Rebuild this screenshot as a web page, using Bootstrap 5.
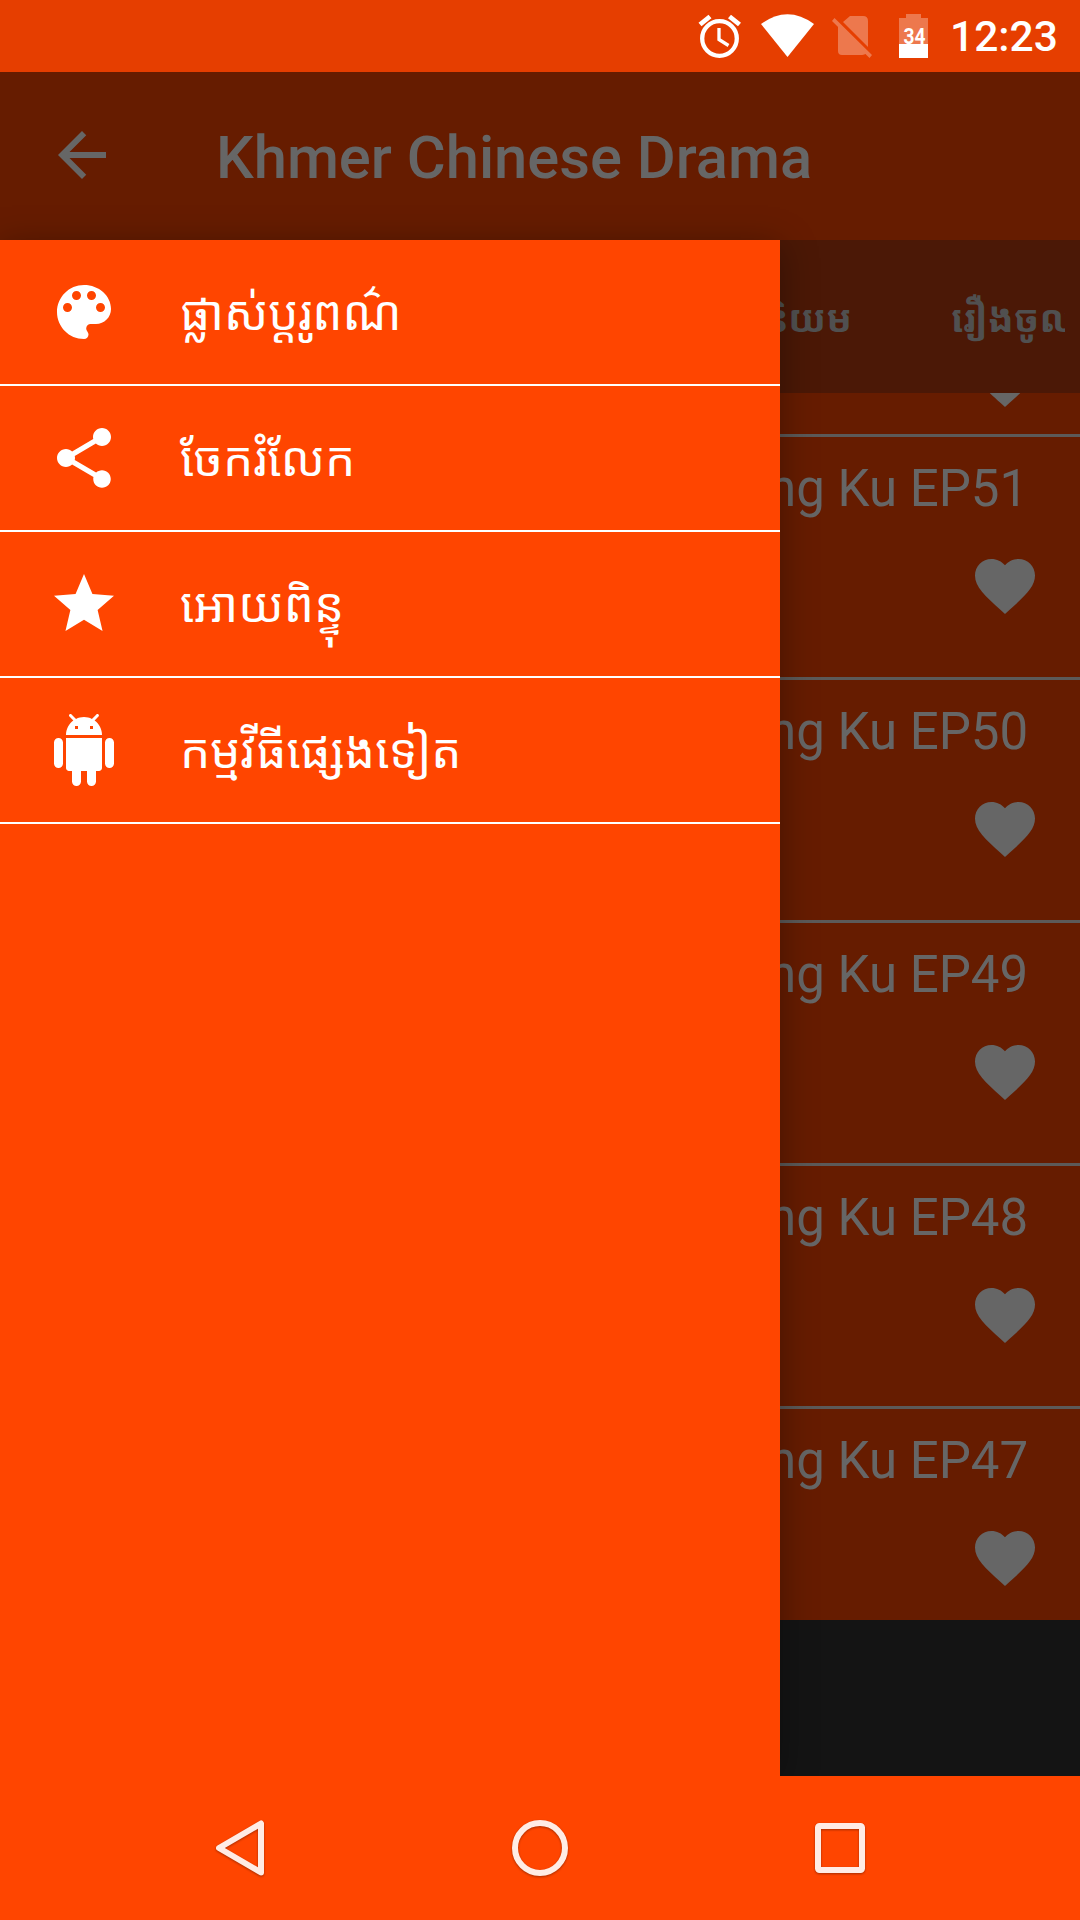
<!DOCTYPE html>
<html lang="km">
<head>
<meta charset="utf-8">
<meta name="viewport" content="width=device-width, initial-scale=1">
<title>Khmer Chinese Drama</title>
<link href="https://cdn.jsdelivr.net/npm/bootstrap@5.3.0/dist/css/bootstrap.min.css" rel="stylesheet">
<style>
  body { font-family: Roboto, "Noto Sans Khmer", "Khmer OS", "Noto Sans", "DejaVu Sans", sans-serif; background: #ff4500; }
  svg { display: block; flex: none; }
  .screen { width: 1080px; height: 1920px; }
  .status-bar { height: 72px; background: #e63e00; z-index: 3; padding-right: 22px; gap: 10px; }
  .status-bar .clock { font-size: 42.500px; font-weight: 500; line-height: 72px; width: 108px; padding-top: 1px; height: 72px; white-space: nowrap; }
  .app-bar { height: 168px; background: #661c00; color: #666; padding: 0 0 2px 46px; }
  .app-bar .app-title { font-size: 59.700px; font-weight: 500; line-height: 1; margin-left: 98px; padding-top: 8px; }
  .stage { height: 1536px; }
  .tab-strip { height: 153px; background: #4b1806; color: #505050; font-size: 38px; font-weight: 700; padding: 5px 15px 0 763px; }
  .tab-strip .tab-label { line-height: 1.6; white-space: nowrap; }
  .tab-strip .tab-cut { width: 114px; overflow: hidden; }
  .episodes { height: 1227px; background: #661c00; color: #666; }
  .episode { height: 243px; border-bottom: 3px solid #5c5a59; padding: 19px 39px 0 0; flex: none; }
  .episode .ep-name { font-size: 51px; line-height: 66px; margin-bottom: 28px; padding-left: 768px; white-space: nowrap; }
  .episode.first-row { height: 44px; padding-top: 0; overflow: hidden; }
  .episode.first-row svg { margin-top: -50px; }
  .ad-slot { height: 156px; background: #141414; }
  .drawer { width: 780px; height: 1536px; background: #ff4500; box-shadow: 0 6px 34px rgba(0,0,0,.34); z-index: 2; }
  .drawer .drawer-item { height: 146px; border-bottom: 2px solid #fff; padding-left: 48px; gap: 60px; color: #fff; font-size: 47.700px; line-height: 1.6; white-space: nowrap; }
  .drawer .drawer-item span { padding-top: 4px; }
  .nav-bar { height: 144px; background: #ff4500; z-index: 3; }
  .nav-bar svg { filter: drop-shadow(0 1px 1px rgba(0,0,0,.35)); }
</style>
</head>
<body>
<svg class="d-none">
  <symbol id="heart" viewBox="0 0 24 24"><path fill="#666" d="M12 21.35l-1.45-1.32C5.4 15.36 2 12.28 2 8.5 2 5.42 4.42 3 7.5 3c1.74 0 3.41.81 4.5 2.09C13.09 3.81 14.76 3 16.5 3 19.58 3 22 5.42 22 8.5c0 3.78-3.4 6.86-8.55 11.54L12 21.35z"/></symbol>
</svg>
<div class="screen d-flex flex-column overflow-hidden position-relative">
  <header class="status-bar d-flex justify-content-end align-items-start position-relative text-white flex-shrink-0">
    <svg width="280" height="72" viewBox="0 0 280 72">
      <g fill="none" stroke="#fff">
        <circle cx="59.500" cy="38.500" r="17.300" stroke-width="4.300"/>
        <path stroke-width="4.800" d="M40 24.500l10-8M79.500 24.500l-10-8"/>
        <path stroke-width="3.300" d="M59 28v11.500l9.500 6"/>
      </g>
      <path fill="#fff" d="M101 24Q127.500 4.500 154 24L127.500 57z"/>
      <path fill="#fff" fill-opacity=".3" d="M190 16h13q5 0 5 5v26L183 22z M178 25L206 53q-1 2-4 2h-20q-4 0-4-4z M174.500 18L212 55l-2.500 3L172 21z"/>
      <path fill="#fff" fill-opacity=".3" d="M239 44V18h7v-4h15v4h7v26z"/>
      <path fill="#fff" d="M239 44h29v14h-29z"/>
      <text x="254.500" y="44" text-anchor="middle" font-family="Roboto" font-weight="700" font-size="22.500" textLength="22" lengthAdjust="spacingAndGlyphs" fill="#fff">34</text>
    </svg>
    <div class="clock">12:23</div>
  </header>

  <div class="app-bar d-flex align-items-center flex-shrink-0">
    <svg width="72" height="72" viewBox="0 0 24 24"><path fill="#666" d="M20 11H7.830l5.590-5.590L12 4l-8 8 8 8 1.410-1.410L7.830 13H20v-2z"/></svg>
    <div class="app-title">Khmer Chinese Drama</div>
  </div>

  <main class="stage position-relative flex-shrink-0">
    <div class="tab-strip d-flex align-items-center justify-content-between">
      <div class="tab-label">និយម</div>
      <div class="tab-label tab-cut">រឿងចូល</div>
    </div>
    <div class="episodes d-flex flex-column overflow-hidden">
      <div class="episode first-row d-flex flex-column align-items-end"><svg width="72" height="72"><use href="#heart"/></svg></div>
      <div class="episode d-flex flex-column align-items-end"><div class="ep-name w-100">ng Ku EP51</div><svg width="72" height="72"><use href="#heart"/></svg></div>
      <div class="episode d-flex flex-column align-items-end"><div class="ep-name w-100">ng Ku EP50</div><svg width="72" height="72"><use href="#heart"/></svg></div>
      <div class="episode d-flex flex-column align-items-end"><div class="ep-name w-100">ng Ku EP49</div><svg width="72" height="72"><use href="#heart"/></svg></div>
      <div class="episode d-flex flex-column align-items-end"><div class="ep-name w-100">ng Ku EP48</div><svg width="72" height="72"><use href="#heart"/></svg></div>
      <div class="episode d-flex flex-column align-items-end"><div class="ep-name w-100">ng Ku EP47</div><svg width="72" height="72"><use href="#heart"/></svg></div>
    </div>
    <div class="ad-slot"></div>

    <nav class="drawer position-absolute top-0 start-0">
      <div class="drawer-item d-flex align-items-center">
        <svg width="72" height="72" viewBox="0 0 24 24" fill="#fff"><path d="M12 3c-4.970 0-9 4.030-9 9s4.030 9 9 9c.830 0 1.500-.670 1.500-1.500 0-.390-.150-.740-.390-1.010-.230-.260-.380-.610-.380-.990 0-.830.670-1.500 1.500-1.500H16c2.760 0 5-2.240 5-5 0-4.420-4.030-8-9-8zm-5.500 9c-.830 0-1.500-.670-1.500-1.500S5.670 9 6.500 9 8 9.670 8 10.500 7.330 12 6.500 12zm3-4C8.670 8 8 7.330 8 6.500S8.670 5 9.500 5s1.500.670 1.500 1.500S10.330 8 9.500 8zm5 0c-.830 0-1.500-.670-1.500-1.500S13.670 5 14.500 5s1.500.670 1.500 1.500S15.330 8 14.500 8zm3 4c-.830 0-1.500-.670-1.500-1.500S16.670 9 17.500 9s1.500.670 1.500 1.500-.670 1.500-1.500 1.500z"/></svg>
        <span>ផ្លាស់ប្តរូពណ៌</span>
      </div>
      <div class="drawer-item d-flex align-items-center">
        <svg width="72" height="72" viewBox="0 0 24 24" fill="#fff"><path d="M18 16.080c-.760 0-1.440.300-1.960.770L8.910 12.700c.050-.230.090-.460.090-.700s-.040-.470-.090-.700l7.050-4.110c.540.500 1.250.810 2.040.810 1.660 0 3-1.340 3-3s-1.340-3-3-3-3 1.340-3 3c0 .240.040.470.090.700L8.040 9.810C7.500 9.310 6.790 9 6 9c-1.660 0-3 1.340-3 3s1.340 3 3 3c.790 0 1.500-.310 2.040-.810l7.120 4.160c-.050.210-.080.430-.080.650 0 1.610 1.310 2.920 2.920 2.920s2.920-1.310 2.920-2.920-1.310-2.920-2.920-2.920z"/></svg>
        <span>ចែករំលែក</span>
      </div>
      <div class="drawer-item d-flex align-items-center">
        <svg width="72" height="72" viewBox="0 0 24 24" fill="#fff"><path d="M12 17.270L18.180 21l-1.640-7.030L22 9.240l-7.190-.610L12 2 9.190 8.630 2 9.240l5.460 4.730L5.820 21z"/></svg>
        <span>អោយពិន្ទុ</span>
      </div>
      <div class="drawer-item d-flex align-items-center">
        <svg width="72" height="72" viewBox="0 0 24 24" fill="#fff" overflow="visible"><path d="M6 18c0 .550.450 1 1 1h1v3.500c0 .830.670 1.500 1.500 1.500s1.500-.670 1.500-1.500V19h2v3.500c0 .830.670 1.500 1.500 1.500s1.500-.670 1.500-1.500V19h1c.550 0 1-.450 1-1V8H6v10zM3.500 8C2.670 8 2 8.670 2 9.500v7c0 .830.670 1.500 1.500 1.500S5 17.330 5 16.500v-7C5 8.670 4.330 8 3.500 8zm17 0c-.830 0-1.500.670-1.500 1.500v7c0 .830.670 1.500 1.500 1.500s1.500-.670 1.500-1.500v-7c0-.830-.670-1.500-1.500-1.500zm-4.970-5.840l1.300-1.300c.200-.200.200-.510 0-.710-.200-.200-.510-.200-.710 0l-1.480 1.480C13.850 1.230 12.950 1 12 1c-.960 0-1.860.230-2.660.630L7.850.150c-.200-.200-.510-.200-.710 0-.200.200-.200.510 0 .710l1.310 1.310C6.970 3.260 6 5.010 6 7h12c0-1.990-.970-3.750-2.470-4.840zM10 5H9V4h1v1zm5 0h-1V4h1v1z"/></svg>
        <span>កម្មវីធីផ្សេងទៀត</span>
      </div>
    </nav>
  </main>

  <footer class="nav-bar d-flex justify-content-center align-items-center position-relative flex-shrink-0">
    <svg width="300" height="144" viewBox="0 0 300 144" fill="none" stroke="#ffece5" stroke-width="6" stroke-linejoin="round"><path d="M171 47.500v49L129 72z"/></svg>
    <svg width="300" height="144" viewBox="0 0 300 144" fill="none" stroke="#ffece5" stroke-width="6"><circle cx="150" cy="72" r="25"/></svg>
    <svg width="300" height="144" viewBox="0 0 300 144" fill="none" stroke="#ffece5" stroke-width="6"><rect x="128" y="50" width="44" height="44" rx="1.500"/></svg>
  </footer>
</div>
<script src="https://cdn.jsdelivr.net/npm/bootstrap@5.3.0/dist/js/bootstrap.bundle.min.js"></script>
</body>
</html>
